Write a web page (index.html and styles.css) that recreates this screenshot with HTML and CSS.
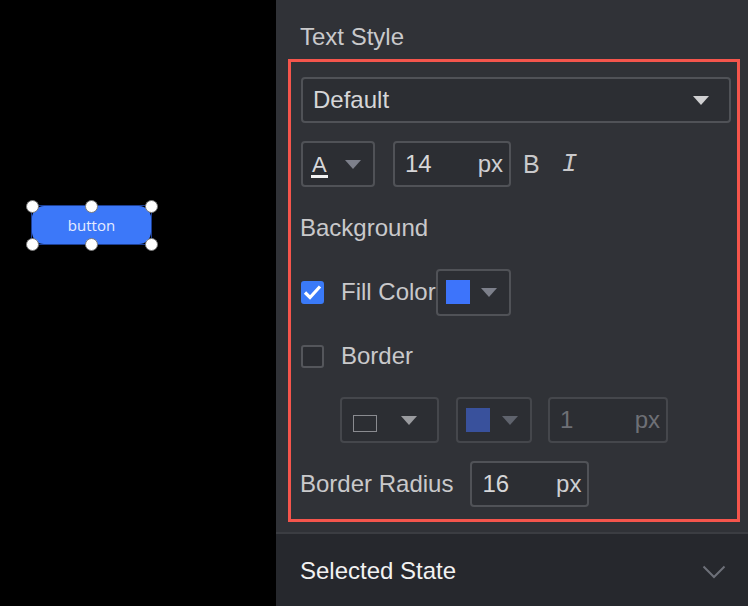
FILE: index.html
```html
<!DOCTYPE html>
<html>
<head>
    <title>Button Style</title>
    <link rel="stylesheet" href="styles.css">
</head>
<body>
    <div class="app">
        <div class="canvas">
            <div class="widget">
                <div class="widget-btn">button</div>
                <span class="handle h-tl"></span>
                <span class="handle h-tm"></span>
                <span class="handle h-tr"></span>
                <span class="handle h-bl"></span>
                <span class="handle h-bm"></span>
                <span class="handle h-br"></span>
            </div>
        </div>

        <div class="panel">
            <div class="section-title">Text Style</div>

            <div class="highlight">
                <div class="row">
                    <div class="box select">
                        <span>Default</span>
                        <i class="caret caret-light"></i>
                    </div>
                </div>

                <div class="row">
                    <div class="box picker font-color">
                        <span class="font-a">A</span>
                        <i class="caret caret-dim"></i>
                    </div>
                    <div class="box num-input size-input">
                        <span>14</span>
                        <span class="unit">px</span>
                    </div>
                    <span class="tool tool-bold">B</span>
                    <span class="tool tool-italic">I</span>
                </div>

                <div class="row">
                    <span class="label">Background</span>
                </div>

                <div class="row">
                    <span class="check checked">
                        <svg width="19" height="16" viewBox="0 0 19 16"><polyline points="2,8.5 7,13.5 17,2.5" fill="none" stroke="#fff" stroke-width="3.2"/></svg>
                    </span>
                    <span class="label check-label">Fill Color</span>
                    <div class="box picker fill-picker">
                        <span class="swatch"></span>
                        <i class="caret caret-dim"></i>
                    </div>
                </div>

                <div class="row">
                    <span class="check"></span>
                    <span class="label check-label">Border</span>
                </div>

                <div class="row indent">
                    <div class="box off line-picker">
                        <span class="line-icon"></span>
                        <i class="caret caret-off"></i>
                    </div>
                    <div class="box off border-color">
                        <span class="swatch swatch-off"></span>
                        <i class="caret caret-off2"></i>
                    </div>
                    <div class="box off num-input width-input">
                        <span>1</span>
                        <span class="unit">px</span>
                    </div>
                </div>

                <div class="row">
                    <span class="label">Border Radius</span>
                    <div class="box num-input radius-input">
                        <span>16</span>
                        <span class="unit">px</span>
                    </div>
                </div>
            </div>

            <div class="footer">
                <span>Selected State</span>
                <svg class="chevron" width="24" height="14" viewBox="0 0 24 14"><polyline points="1.5,1.5 12,12 22.5,1.5" fill="none" stroke="#6d7079" stroke-width="2"/></svg>
            </div>
        </div>
    </div>
</body>
</html>
```

FILE: styles.css
```css
body {
    margin: 0;
    font-family: 'Liberation Sans', Arial, sans-serif;
    background: #000;
}
.app {
    display: flex;
    width: 748px;
    height: 606px;
    overflow: hidden;
}

/* canvas */
.canvas {
    position: relative;
    width: 276px;
    height: 606px;
    background: #000;
}
.widget {
    position: absolute;
    left: 32px;
    top: 206px;
    width: 119px;
    height: 38px;
    outline: 1px solid #1d3f93;
}
.widget-btn {
    height: 100%;
    background: #3c78f9;
    border-radius: 12px;
    color: #e6ecff;
    font-family: 'Open Sans', sans-serif;
    font-size: 15px;
    display: flex;
    align-items: center;
    justify-content: center;
}
.handle {
    position: absolute;
    width: 11px;
    height: 11px;
    border-radius: 50%;
    background: #fff;
    border: 1px solid #7a7a7a;
}
.h-tl { left: -6px; top: -6px; }
.h-tm { left: 53px; top: -6px; }
.h-tr { left: 113px; top: -6px; }
.h-bl { left: -6px; top: 32px; }
.h-bm { left: 53px; top: 32px; }
.h-br { left: 113px; top: 32px; }

/* panel */
.panel {
    flex: 1;
    background: #303237;
    display: flex;
    flex-direction: column;
}
.section-title {
    padding: 23px 0 0 24px;
    height: 28px;
    line-height: 28px;
    font-size: 24px;
    color: #c9c9cb;
    margin-bottom: 8px;
}
.highlight {
    margin: 0 8px 0 12px;
    border: 3px solid #f4554c;
    padding: 15px 6px 12px 10px;
    display: flex;
    flex-direction: column;
    gap: 18px;
}
.row {
    height: 46px;
    display: flex;
    align-items: center;
}
.label {
    font-size: 24px;
    color: #c9c9cb;
    white-space: nowrap;
    margin-left: -1px;
}

.box {
    box-sizing: border-box;
    height: 46px;
    border: 2px solid #505257;
    border-radius: 4px;
    background: #2c2e33;
    display: flex;
    align-items: center;
    font-size: 24px;
    color: #d6d6d8;
}
.select {
    width: 430px;
    padding: 0 20px 0 10px;
    justify-content: space-between;
}
.caret {
    width: 0;
    height: 0;
    border-left: 8px solid transparent;
    border-right: 8px solid transparent;
    border-top: 9px solid #d0d0d2;
}
.caret-dim { border-top-color: #7d808b; }
.caret-off { border-top-color: #9a9b9f; }
.caret-off2 { border-top-color: #5f636d; }

.picker {
    padding: 0 12px 0 8px;
    justify-content: space-between;
}
.font-color {
    width: 74px;
}
.font-a {
    font-size: 22px;
    color: #d8d8da;
    border-bottom: 3px solid #f2f2f2;
    line-height: 21px;
    padding: 0 1px;
    margin-top: 4px;
}
.num-input {
    padding: 0 6px 0 10px;
    justify-content: space-between;
}
.size-input {
    width: 118px;
    margin-left: 18px;
}
.unit {
    color: #cfcfd1;
}
.tool {
    font-size: 25px;
    color: #c9c9cb;
}
.tool-bold {
    margin-left: 12px;
}
.tool-italic {
    margin-left: 22px;
    font-family: 'Liberation Mono', monospace;
    font-style: italic;
    font-size: 26px;
}

.check {
    box-sizing: border-box;
    width: 23px;
    height: 23px;
    border: 2px solid #54565b;
    border-radius: 3px;
    background: #2a2c31;
    display: flex;
    align-items: center;
    justify-content: center;
}
.check.checked {
    background: #3a7af8;
    border-color: #3a7af8;
}
.check-label {
    margin-left: 17px;
}
.fill-picker {
    width: 75px;
    height: 47px;
    padding: 0 12px 0 8px;
}
.swatch {
    width: 24px;
    height: 24px;
    background: #3d74fb;
}

.indent {
    padding-left: 39px;
}
.box.off {
    border-color: #45474c;
    color: #6e7076;
}
.line-picker {
    width: 99px;
    padding: 0 20px 0 11px;
    justify-content: space-between;
}
.line-icon {
    box-sizing: border-box;
    width: 24px;
    height: 17px;
    border: 1.5px solid #8a8b90;
    margin-top: 6px;
}
.border-color {
    width: 76px;
    margin-left: 17px;
    padding: 0 12px 0 8px;
    justify-content: space-between;
}
.swatch-off {
    background: #39519c;
}
.width-input {
    width: 120px;
    margin-left: 16px;
}
.width-input .unit {
    color: #6e7076;
}
.radius-input {
    width: 119px;
    margin-left: 17px;
}

.footer {
    margin-top: 10px;
    border-top: 2px solid #3b3d42;
    background: #26282d;
    flex: 1;
    padding: 23px 22px 0 24px;
    display: flex;
    align-items: flex-start;
    justify-content: space-between;
    font-size: 24px;
    line-height: 28px;
    color: #f2f2f2;
}
.chevron {
    margin-top: 8px;
}
```
